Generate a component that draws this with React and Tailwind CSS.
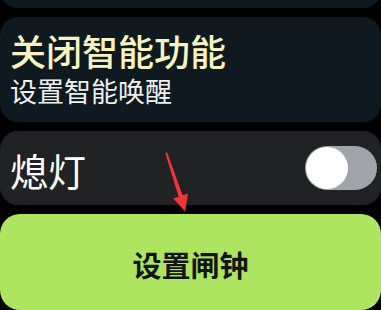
import React from 'react';

const font = { fontFamily: '"Noto Sans CJK SC", "Noto Sans", sans-serif' };

const Toggle = () => (
  <div className="w-[72px] h-[44px] rounded-full bg-[#a1a4ab] flex items-center pl-[1px]">
    <div className="w-[42px] h-[42px] rounded-full bg-white" />
  </div>
);

const Arrow = () => (
  <svg className="absolute left-0 top-0 pointer-events-none" width="381" height="310" viewBox="0 0 381 310">
    <polygon
      points="165.3,153 167.2,152.4 182.6,195.2 188,193.4 185.2,211.5 173.2,198.6 178.6,196.7"
      fill="#f2343a"
    />
  </svg>
);

export default function App() {
  return (
    <div className="relative w-[381px] h-[310px] bg-black overflow-hidden" style={font}>
      <div className="flex flex-col gap-[9px]">
        {/* previous item, mostly scrolled away */}
        <div className="h-[40px] -mt-[32px] rounded-[18px] bg-[#0e1a20]" />

        <div className="rounded-[18px] bg-[#0e1a20] pt-[15px] pb-[17px] px-[10px]">
          <div className="text-[36px] leading-[36px] font-medium text-[#f7f3bf]">关闭智能功能</div>
          <div className="mt-[9px] text-[27px] leading-[28px] text-[#eef0f2]">设置智能唤醒</div>
        </div>

        <div className="h-[74px] rounded-[18px] bg-[#212224] flex items-center justify-between pl-[10px] pr-[4px]">
          <span className="text-[38px] leading-[44px] text-white mt-[3px]">熄灯</span>
          <Toggle />
        </div>

        <button className="h-[96px] rounded-[20px] bg-[#aee560] flex items-center justify-center">
          <span className="text-[29px] leading-[34px] font-bold text-[#151515] mt-[3px]">设置闸钟</span>
        </button>
      </div>
      <Arrow />
    </div>
  );
}
